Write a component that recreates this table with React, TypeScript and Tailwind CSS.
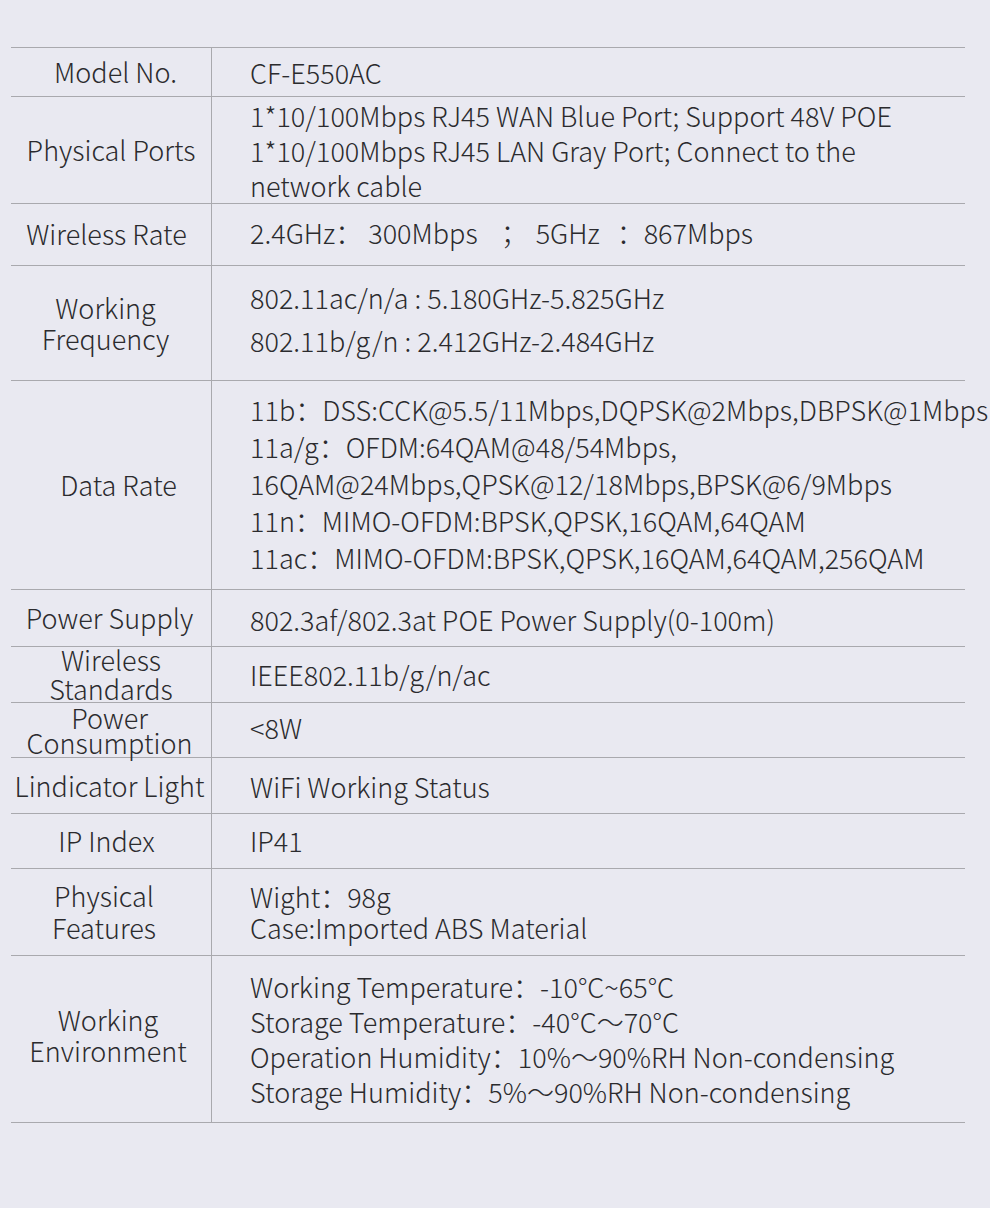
import React from "react";

type Row = {
  label: React.ReactNode;
  h: string;
  labelClass?: string;
  valueClass?: string;
  lines: React.ReactNode[];
};

const rows: Row[] = [
  { label: "Model No.", h: "h-[49px]", labelClass: "pl-[9px] leading-[30px]", lines: ["CF-E550AC"] },
  {
    label: "Physical Ports",
    h: "h-[107px]",
    valueClass: "leading-[35px]",
    lines: [
      "1*10/100Mbps RJ45 WAN Blue Port; Support 48V POE",
      "1*10/100Mbps RJ45 LAN Gray Port; Connect to the",
      "network cable",
    ],
  },
  {
    label: "Wireless Rate",
    h: "h-[62px]",
    labelClass: "pr-[9px] leading-[30px] pb-[2px]",
    valueClass: "leading-[35px] whitespace-nowrap pb-[4px]",
    lines: [
      <>
        <span>2.4GHz：</span>
        <span className="ml-[6px]">300Mbps</span>
        <span className="ml-[23px]">；</span>
        <span className="ml-[8px]">5GHz</span>
        <span className="ml-[17px]">：</span>
        <span>867Mbps</span>
      </>,
    ],
  },
  {
    label: (
      <>
        Working
        <br />
        Frequency
      </>
    ),
    h: "h-[115px]",
    labelClass: "leading-[31px] pr-[11px]",
    valueClass: "leading-[43px] pb-[8px]",
    lines: ["802.11ac/n/a : 5.180GHz-5.825GHz", "802.11b/g/n : 2.412GHz-2.484GHz"],
  },
  {
    label: "Data Rate",
    h: "h-[209px]",
    labelClass: "pl-[15px] leading-[30px]",
    valueClass: "leading-[37px] whitespace-nowrap pb-[4px]",
    lines: [
      "11b：DSS:CCK@5.5/11Mbps,DQPSK@2Mbps,DBPSK@1Mbps",
      "11a/g：OFDM:64QAM@48/54Mbps,",
      "16QAM@24Mbps,QPSK@12/18Mbps,BPSK@6/9Mbps",
      "11n：MIMO-OFDM:BPSK,QPSK,16QAM,64QAM",
      "11ac：MIMO-OFDM:BPSK,QPSK,16QAM,64QAM,256QAM",
    ],
  },
  {
    label: "Power Supply",
    h: "h-[57px]",
    labelClass: "pr-[3px] leading-[30px]",
    valueClass: "leading-[35px] pt-[2px]",
    lines: ["802.3af/802.3at POE Power Supply(0-100m)"],
  },
  {
    label: (
      <>
        Wireless
        <br />
        Standards
      </>
    ),
    h: "h-[56px]",
    labelClass: "leading-[29px] pb-[2px]",
    valueClass: "leading-[35px] pb-[1px]",
    lines: ["IEEE802.11b/g/n/ac"],
  },
  {
    label: (
      <>
        Power
        <br />
        Consumption
      </>
    ),
    h: "h-[55px]",
    labelClass: "leading-[25px] pr-[3px]",
    valueClass: "leading-[35px] pb-[5px]",
    lines: ["<8W"],
  },
  {
    label: "Lindicator Light",
    h: "h-[56px]",
    labelClass: "pr-[3px] leading-[30px]",
    valueClass: "leading-[35px] pt-[2px]",
    lines: ["WiFi Working Status"],
  },
  {
    label: "IP Index",
    h: "h-[55px]",
    labelClass: "pr-[9px] leading-[30px]",
    valueClass: "leading-[35px] pb-[1px]",
    lines: ["IP41"],
  },
  {
    label: (
      <>
        Physical
        <br />
        Features
      </>
    ),
    h: "h-[87px]",
    labelClass: "leading-[32px] pr-[14px]",
    valueClass: "leading-[31px]",
    lines: ["Wight：98g", "Case:Imported ABS Material"],
  },
  {
    label: (
      <>
        Working
        <br />
        Environment
      </>
    ),
    h: "h-[167px]",
    labelClass: "leading-[31px] pr-[6px] pb-[8px]",
    valueClass: "leading-[35px] whitespace-nowrap",
    lines: [
      "Working Temperature：-10°C~65°C",
      "Storage Temperature：-40°C～70°C",
      "Operation Humidity：10%～90%RH Non-condensing",
      "Storage Humidity：5%～90%RH Non-condensing",
    ],
  },
];

export default function App() {
  return (
    <div
      className="w-[990px] h-[1208px] bg-[#e9e9f1] text-[#2b2b2e] font-light text-[27px] pt-[47px] pl-[11px]"
      style={{ fontFamily: '"Noto Sans CJK SC", "Noto Sans", sans-serif' }}
    >
      <div className="w-[954px] border-t border-[#a9a9ae]">
        {rows.map((r, i) => (
          <div key={i} className={`flex border-b border-[#a9a9ae] ${r.h}`}>
            <div
              className={`w-[201px] shrink-0 border-r border-[#a9a9ae] flex items-center justify-center text-center whitespace-nowrap ${r.labelClass ?? "leading-[30px]"}`}
            >
              <div>{r.label}</div>
            </div>
            <div className="flex-1 flex items-center pl-[38px] min-w-0">
              <div className={r.valueClass ?? "leading-[35px]"}>
                {r.lines.map((l, j) => (
                  <div key={j}>{l}</div>
                ))}
              </div>
            </div>
          </div>
        ))}
      </div>
    </div>
  );
}
